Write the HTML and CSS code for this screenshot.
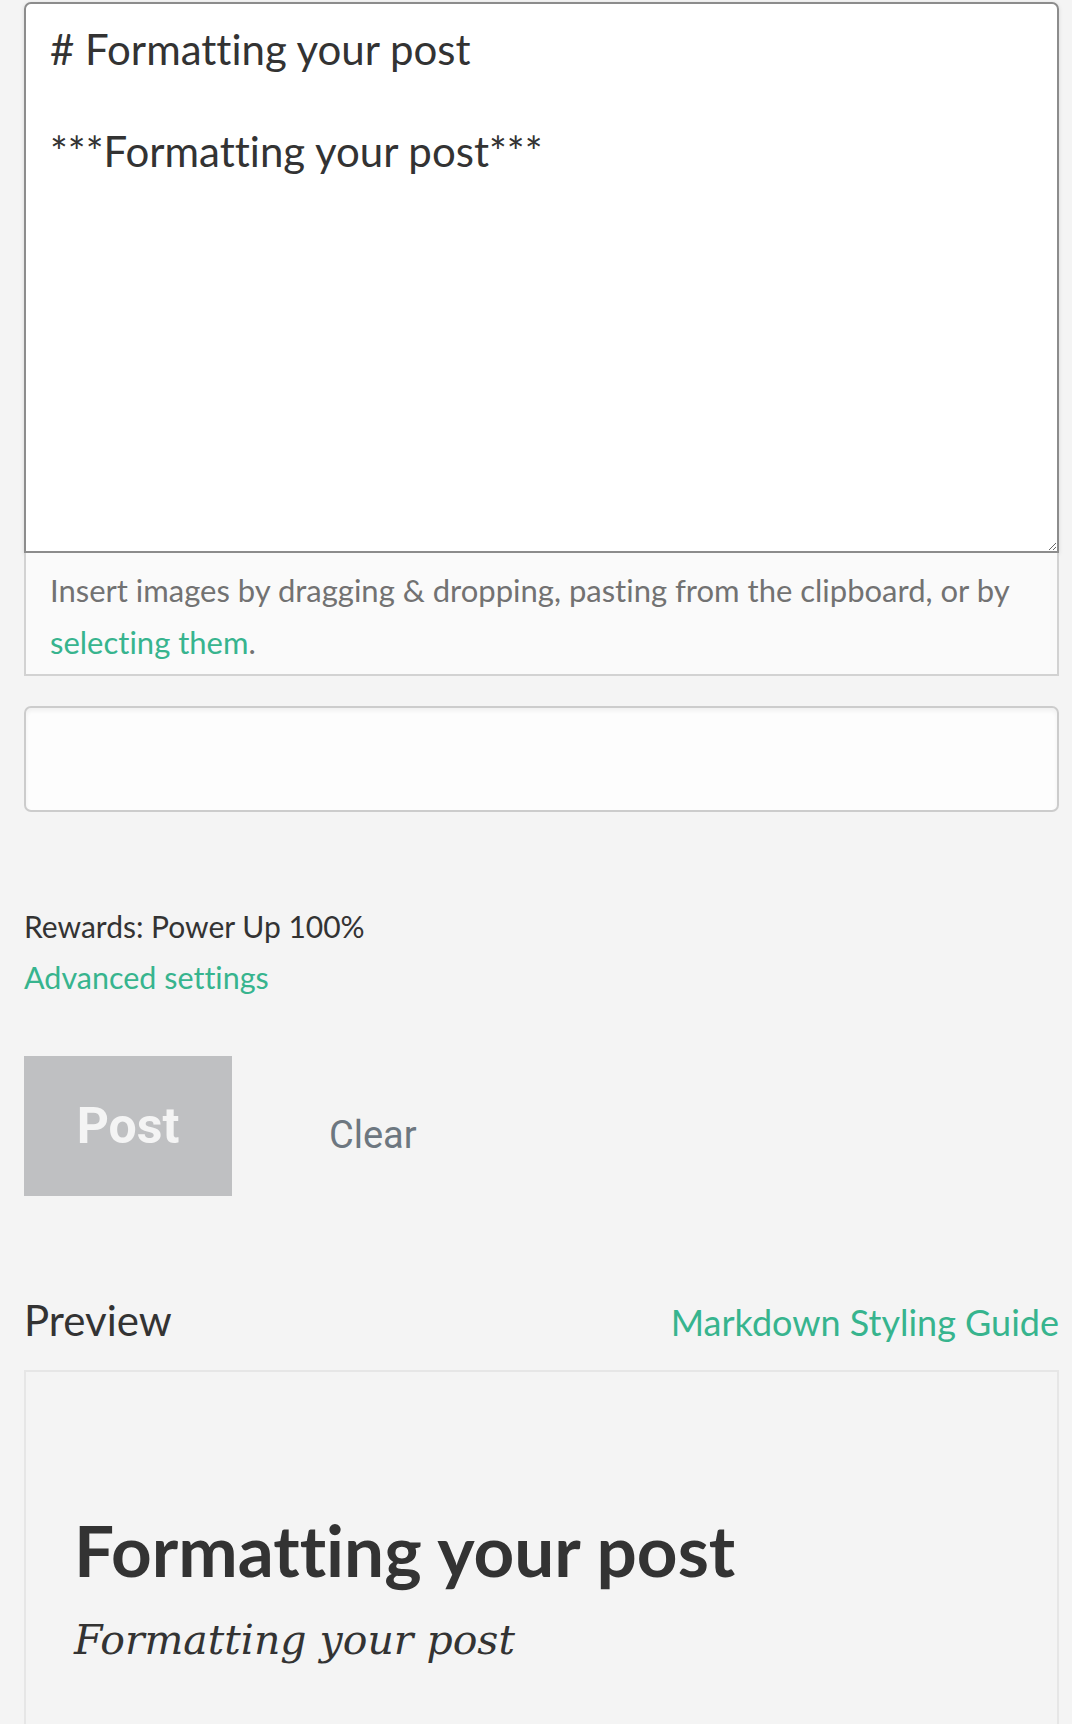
FILE: index.html
```html
<!DOCTYPE html>
<html lang="en">
<head>
<meta charset="utf-8">
<title>Submit post</title>
<link rel="stylesheet" href="styles.css">
</head>
<body>
<div class="page">
  <div class="editor">
    <textarea class="body-input" spellcheck="false"># Formatting your post

***Formatting your post***</textarea>
    <div class="dropzone">Insert images by dragging &amp; dropping, pasting from the clipboard, or by <a class="link" href="#">selecting them</a>.</div>
  </div>
  <input class="tags-input" type="text">
  <div class="rewards">Rewards: Power Up 100%</div>
  <a class="link advanced" href="#">Advanced settings</a>
  <div class="actions">
    <button class="btn-post" type="button">Post</button>
    <button class="btn-clear" type="button">Clear</button>
  </div>
  <div class="preview-head">
    <h2 class="preview-title">Preview</h2>
    <a class="link guide" href="#">Markdown Styling Guide</a>
  </div>
  <div class="preview">
    <h1 class="preview-h1">Formatting your post</h1>
    <p class="preview-p"><strong><em>Formatting your post</em></strong></p>
  </div>
</div>
</body>
</html>
```

FILE: styles.css
```css
html, body {
  margin: 0;
  padding: 0;
  background: #f4f4f4;
}

body {
  font-family: Lato, "Noto Sans", sans-serif;
  font-variant-ligatures: none;
  color: #333333;
}

.page {
  padding: 2px 13px 0 24px;
  display: flex;
  flex-direction: column;
}

.link {
  color: #37b48e;
  text-decoration: none;
}

.editor {
  display: flex;
  flex-direction: column;
}

.body-input {
  box-sizing: border-box;
  display: block;
  width: 100%;
  height: 551px;
  margin: 0;
  padding: 20px 24px;
  border: 2px solid #8c8c8c;
  border-radius: 7px 7px 0 0;
  background: #ffffff;
  font-family: Lato, "Noto Sans", sans-serif;
  font-variant-ligatures: none;
  font-size: 42px;
  line-height: 51px;
  color: #333333;
  box-shadow: 0 1px 4px rgba(0, 0, 0, 0.12);
  outline: none;
}

.dropzone {
  box-sizing: border-box;
  height: 123px;
  padding: 11px 24px 0 24px;
  border: 2px solid #d2d2d2;
  border-top: none;
  background: #fafafa;
  color: #727272;
  font-size: 31px;
  line-height: 52px;
}

.tags-input {
  box-sizing: border-box;
  display: block;
  width: 100%;
  height: 106px;
  margin: 30px 0 0 0;
  padding: 0 24px;
  border: 2px solid #cccccc;
  border-radius: 7px;
  background: #fdfdfd;
  box-shadow: inset 0 3px 4px rgba(0, 0, 0, 0.05);
  font-family: Lato, sans-serif;
  font-size: 32px;
  outline: none;
}

.rewards {
  margin-top: 89px;
  font-size: 30px;
  line-height: 51px;
  color: #333333;
}

.advanced {
  align-self: flex-start;
  font-size: 30.5px;
  line-height: 51px;
}

.actions {
  display: flex;
  align-items: flex-start;
  margin-top: 53px;
}

.btn-post {
  width: 208px;
  height: 140px;
  margin: 0;
  padding: 0;
  border: none;
  background: #bfc0c2;
  color: #f4f4f4;
  font-family: Roboto, sans-serif;
  font-weight: 700;
  font-size: 50px;
}

.btn-clear {
  margin: 57px 0 0 97px;
  padding: 0;
  border: none;
  background: transparent;
  color: #6d7780;
  font-family: Roboto, sans-serif;
  font-weight: 400;
  font-size: 38px;
  line-height: normal;
}

.preview-head {
  display: flex;
  justify-content: space-between;
  align-items: baseline;
  margin-top: 99px;
}

.preview-title {
  margin: 0;
  font-size: 42px;
  font-weight: 400;
  line-height: 1.2;
  color: #333333;
}

.guide {
  font-size: 36px;
  line-height: 1.2;
}

.preview {
  margin-top: 25px;
  min-height: 400px;
  padding: 135px 48px 0 48px;
  border: 2px solid #e6e6e6;
  border-bottom: none;
}

.preview-h1 {
  margin: 0;
  font-size: 71px;
  font-weight: 700;
  line-height: 1.2;
  color: #333333;
}

.preview-p {
  margin: 23px 0 0 0;
  font-family: "DejaVu Serif", "Liberation Serif", serif;
  font-size: 41px;
  line-height: 48px;
  color: #333333;
}

.preview-p strong {
  font-weight: 400;
}
```
